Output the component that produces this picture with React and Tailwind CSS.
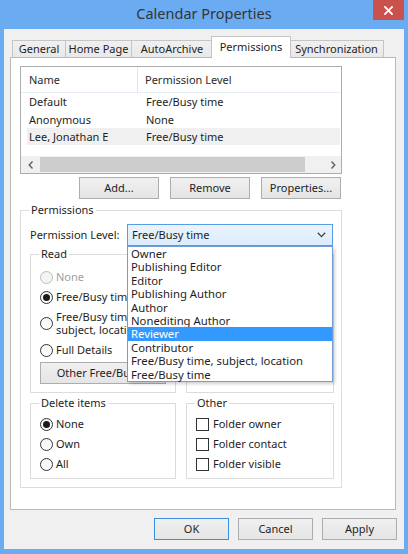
import React from "react";

function Radio({ checked, disabled }) {
  return (
    <span
      className={
        disabled
          ? "w-[13px] h-[13px] rounded-full border border-[#bcbcbc] bg-[#f4f4f4] flex items-center justify-center shrink-0"
          : "w-[13px] h-[13px] rounded-full border border-[#333333] bg-gradient-to-b from-[#f4f4f4] to-[#ffffff] flex items-center justify-center shrink-0"
      }
    >
      {checked && <span className="w-[7px] h-[7px] rounded-full bg-[#1b1b1b]" />}
    </span>
  );
}

function Check() {
  return <span className="w-[13px] h-[13px] border border-[#333333] bg-white shrink-0" />;
}

function Btn({ children, className = "" }) {
  return (
    <div
      className={
        "h-[22px] border border-[#adadad] bg-gradient-to-b from-[#f0f0f0] to-[#e5e5e5] flex items-center justify-center text-[#1e1e1e] " +
        className
      }
    >
      {children}
    </div>
  );
}

function Tab({ label, active, className = "" }) {
  return (
    <div
      className={
        active
          ? "relative z-10 h-[22px] -mb-px bg-white border border-b-0 border-[#c5c5c5] flex items-center justify-center pb-[2px] text-[#1e1e1e] whitespace-nowrap " + className
          : "h-[17px] bg-gradient-to-b from-[#f0f0f0] to-[#e8e8e8] border border-b-0 border-[#c5c5c5] flex items-center justify-center text-[#1e1e1e] whitespace-nowrap " + className
      }
    >
      {label}
    </div>
  );
}

const items = [
  "Owner",
  "Publishing Editor",
  "Editor",
  "Publishing Author",
  "Author",
  "Nonediting Author",
  "Reviewer",
  "Contributor",
  "Free/Busy time, subject, location",
  "Free/Busy time",
];

export default function App() {
  return (
    <div className="w-[408px] h-[554px] bg-[#6aabf2] flex flex-col px-[4px] pb-[5px] font-['Noto_Sans',sans-serif] text-[11px] leading-[14px] text-[#1e1e1e] overflow-hidden">
      {/* title bar */}
      <div className="h-[29px] flex items-start shrink-0">
        <div className="flex-1 pl-[31px] text-center text-[14.5px] leading-[27px] text-[#353535]">
          Calendar Properties
        </div>
        <div className="w-[31px] h-[20px] bg-[#c9524c] flex items-center justify-center">
          <svg width="9" height="9" viewBox="0 0 9 9">
            <path d="M1 1L8 8M8 1L1 8" stroke="#ffffff" strokeWidth="1.8" strokeLinecap="square" />
          </svg>
        </div>
      </div>

      {/* client area */}
      <div className="flex-1 bg-[#f0f0f0] flex flex-col pt-[7px]">
        <div className="ml-[6px] w-[386px] flex flex-col">
          {/* tabs */}
          <div className="h-[21px] flex items-end pl-[2px]">
            <Tab label="General" className="w-[54px]" />
            <Tab label="Home Page" className="w-[67px] -ml-px" />
            <Tab label="AutoArchive" className="w-[82px] -ml-px" />
            <Tab label="Permissions" active className="w-[80px] -ml-[2px]" />
            <Tab label="Synchronization" className="w-[95px] -ml-[2px]" />
          </div>

          {/* panel */}
          <div className="h-[453px] bg-white border border-[#b9b9b9] pl-[9px] pt-[8px] flex flex-col">
            {/* list box */}
            <div className="w-[322px] h-[108px] border border-[#adadad] flex flex-col">
              <div className="h-[26px] flex border-b border-[#e8eef5] text-[#2b2b2b]">
                <div className="w-[117px] pl-[8px] border-r border-[#e5e5e5] flex items-center">Name</div>
                <div className="pl-[7px] flex items-center">Permission Level</div>
              </div>
              <div className="flex flex-col ml-[6px] mr-px">
                <div className="h-[18px] flex items-center pl-[2px]">
                  <div className="w-[117px]">Default</div>
                  <div>Free/Busy time</div>
                </div>
                <div className="h-[17px] flex items-center pl-[2px]">
                  <div className="w-[117px]">Anonymous</div>
                  <div>None</div>
                </div>
                <div className="h-[17px] flex items-center pl-[2px] bg-[#f0f0f0]">
                  <div className="w-[117px]">Lee, Jonathan E</div>
                  <div>Free/Busy time</div>
                </div>
              </div>
              <div className="mt-auto h-[17px] flex items-center bg-[#f0f0f0]">
                <div className="w-[19px] h-full flex items-center justify-center">
                  <svg width="6" height="8" viewBox="0 0 6 8">
                    <path d="M4.5 0.5L1.2 4L4.5 7.5" fill="none" stroke="#606060" strokeWidth="1.4" />
                  </svg>
                </div>
                <div className="w-[265px] h-[15px] bg-[#cdcdcd]" />
                <div className="flex-1" />
                <div className="w-[17px] h-full flex items-center justify-center">
                  <svg width="6" height="8" viewBox="0 0 6 8">
                    <path d="M1.5 0.5L4.8 4L1.5 7.5" fill="none" stroke="#606060" strokeWidth="1.4" />
                  </svg>
                </div>
              </div>
            </div>

            {/* buttons */}
            <div className="w-[321px] mt-[3px] flex justify-end gap-[11px]">
              <Btn className="w-[80px]">Add...</Btn>
              <Btn className="w-[80px]">Remove</Btn>
              <Btn className="w-[80px]">Properties...</Btn>
            </div>

            {/* permissions group */}
            <fieldset className="w-[322px] mt-[4px] border border-[#dcdcdc] pb-[8px]">
              <legend className="ml-[8px] px-[2px] leading-[14px]">Permissions</legend>
              <div className="pl-[9px] mt-[7px] flex items-center">
                <div className="w-[97px]">Permission Level:</div>
                <div className="relative w-[206px] h-[22px]">
                  <div className="h-full border border-[#569de5] bg-gradient-to-b from-[#ecf4fc] to-[#dcecfc] flex items-center pl-[4px] pr-[6px]">
                    <span className="flex-1">Free/Busy time</span>
                    <svg width="9" height="6" viewBox="0 0 9 6">
                      <path d="M0.8 0.8L4.5 4.6L8.2 0.8" fill="none" stroke="#404040" strokeWidth="1.3" />
                    </svg>
                  </div>
                  {/* open dropdown list */}
                  <div className="absolute left-0 top-full w-[206px] z-20 bg-white border border-[#6f9fd6] shadow-[2px_2px_3px_rgba(0,0,0,0.18)] flex flex-col">
                    {items.map((it) => (
                      <div
                        key={it}
                        className={
                          it === "Reviewer"
                            ? "h-[13.4px] leading-[13.4px] pl-[3px] bg-[#3399ff] text-white text-[11.3px] whitespace-nowrap"
                            : "h-[13.4px] leading-[13.4px] pl-[3px] text-[11.3px] whitespace-nowrap"
                        }
                      >
                        {it}
                      </div>
                    ))}
                  </div>
                </div>
              </div>

              <div className="pl-[9px] mt-px flex gap-[10px]">
                {/* Read */}
                <fieldset className="w-[146px] h-[146px] border border-[#dcdcdc]">
                  <legend className="ml-[8px] px-[2px] leading-[14px]">Read</legend>
                  <div className="pl-[9px] mt-[6px] flex flex-col">
                    <div className="h-[20px] flex items-center gap-[3px] text-[#a0a0a0]">
                      <Radio disabled />
                      <span>None</span>
                    </div>
                    <div className="h-[20px] flex items-center gap-[3px]">
                      <Radio checked />
                      <span>Free/Busy time</span>
                    </div>
                    <div className="mt-[3px] flex items-center gap-[3px] leading-[13px]">
                      <Radio />
                      <span>
                        Free/Busy time,
                        <br />
                        subject, location
                      </span>
                    </div>
                    <div className="mt-[4px] h-[20px] flex items-center gap-[3px]">
                      <Radio />
                      <span>Full Details</span>
                    </div>
                    <Btn className="mt-[2px] w-[126px]">Other Free/Busy...</Btn>
                  </div>
                </fieldset>
                {/* Write */}
                <fieldset className="w-[148px] h-[146px] border border-[#dcdcdc]">
                  <legend className="ml-[8px] px-[2px] leading-[14px]">Write</legend>
                  <div className="pl-[9px] mt-[6px] flex flex-col">
                    <div className="h-[20px] flex items-center gap-[4px]"><Check /><span>Create items</span></div>
                    <div className="h-[20px] flex items-center gap-[4px]"><Check /><span>Create subfolders</span></div>
                    <div className="h-[20px] flex items-center gap-[4px]"><Check /><span>Edit own</span></div>
                    <div className="h-[20px] flex items-center gap-[4px]"><Check /><span>Edit all</span></div>
                  </div>
                </fieldset>
              </div>

              <div className="pl-[9px] mt-[3px] flex gap-[10px]">
                {/* Delete items */}
                <fieldset className="w-[146px] h-[83px] border border-[#dcdcdc]">
                  <legend className="ml-[8px] px-[2px] leading-[14px]">Delete items</legend>
                  <div className="pl-[9px] mt-[4px] flex flex-col">
                    <div className="h-[20px] flex items-center gap-[3px]"><Radio checked /><span>None</span></div>
                    <div className="h-[20px] flex items-center gap-[3px]"><Radio /><span>Own</span></div>
                    <div className="h-[20px] flex items-center gap-[3px]"><Radio /><span>All</span></div>
                  </div>
                </fieldset>
                {/* Other */}
                <fieldset className="w-[148px] h-[83px] border border-[#dcdcdc]">
                  <legend className="ml-[8px] px-[2px] leading-[14px]">Other</legend>
                  <div className="pl-[9px] mt-[4px] flex flex-col">
                    <div className="h-[20px] flex items-center gap-[4px]"><Check /><span>Folder owner</span></div>
                    <div className="h-[20px] flex items-center gap-[4px]"><Check /><span>Folder contact</span></div>
                    <div className="h-[20px] flex items-center gap-[4px]"><Check /><span>Folder visible</span></div>
                  </div>
                </fieldset>
              </div>
            </fieldset>
          </div>
        </div>

        {/* dialog buttons */}
        <div className="mt-[8px] pr-[7px] flex justify-end gap-[9px]">
          <Btn className="w-[75px] !border-[#3c8fe0]">OK</Btn>
          <Btn className="w-[75px]">Cancel</Btn>
          <Btn className="w-[75px]">Apply</Btn>
        </div>
      </div>
    </div>
  );
}
